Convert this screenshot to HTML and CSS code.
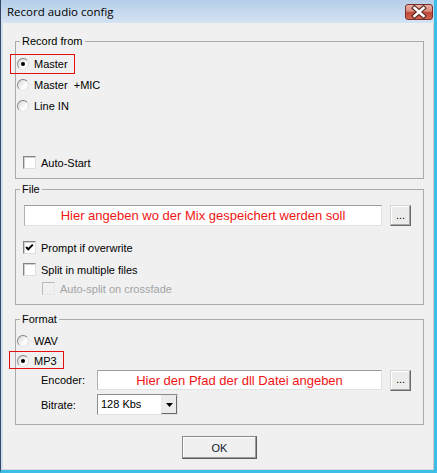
FILE: index.html
```html
<!DOCTYPE html>
<html lang="de">
<head>
  <meta charset="UTF-8">
  <meta name="viewport" content="width=device-width, initial-scale=1.0">
  <title>Record audio config</title>
  <link rel="stylesheet" href="styles.css">
</head>
<body>
  <div class="window">
    <div class="titlebar">
      <span class="title">Record audio config</span>
      <div class="close">
        <svg width="26" height="14" viewBox="0 0 26 14">
          <path d="M8.5 3 L17.5 11 M17.5 3 L8.5 11" stroke="#5b2620" stroke-width="4.8" stroke-linecap="square"/>
          <path d="M8.5 3 L17.5 11 M17.5 3 L8.5 11" stroke="#fff" stroke-width="2.6" stroke-linecap="square"/>
        </svg>
      </div>
    </div>

    <div class="client">
      <fieldset class="group g-record">
        <legend>Record from</legend>
        <div class="row r21"><span class="opt marked m-master"><span class="radio on"></span>Master</span></div>
        <div class="row r21"><span class="opt"><span class="radio"></span>Master &nbsp;+MIC</span></div>
        <div class="row r21"><span class="opt"><span class="radio"></span>Line IN</span></div>
        <div class="row r21 auto-start"><span class="opt"><span class="check"></span>Auto-Start</span></div>
      </fieldset>

      <fieldset class="group g-file">
        <legend>File</legend>
        <div class="row path-row">
          <div class="field path-field">Hier angeben wo der Mix gespeichert werden soll</div>
          <div class="browse">...</div>
        </div>
        <div class="row r19 prompt-row">
          <span class="opt"><span class="check on">
            <svg width="11" height="11" viewBox="0 0 11 11"><polyline points="2,5 4.3,7.3 8.8,2.6" fill="none" stroke="#000" stroke-width="2"/></svg>
          </span>Prompt if overwrite</span>
        </div>
        <div class="row r19 split-row"><span class="opt"><span class="check"></span>Split in multiple files</span></div>
        <div class="row r19 sub-row"><span class="opt disabled"><span class="check off"></span>Auto-split on crossfade</span></div>
      </fieldset>

      <fieldset class="group g-format">
        <legend>Format</legend>
        <div class="row r20"><span class="opt"><span class="radio"></span>WAV</span></div>
        <div class="row r19"><span class="opt marked m-mp3"><span class="radio on"></span>MP3</span></div>
        <div class="row enc-row">
          <span class="lbl">Encoder:</span>
          <div class="field enc-field">Hier den Pfad der dll Datei angeben</div>
          <div class="browse">...</div>
        </div>
        <div class="row bit-row">
          <span class="lbl">Bitrate:</span>
          <div class="combo">
            <span class="combo-value">128 Kbs</span>
            <span class="combo-btn">
              <svg width="7" height="4" viewBox="0 0 7 4"><polygon points="0,0 7,0 3.5,4" fill="#000"/></svg>
            </span>
          </div>
        </div>
      </fieldset>

      <div class="actions">
        <div class="btn-ok">OK</div>
      </div>
    </div>
  </div>
</body>
</html>
```

FILE: styles.css
```css
* { box-sizing: border-box; }
body {
  margin: 0;
  background: #f0f0f0;
  font-family: "Liberation Sans", Arial, sans-serif;
  font-size: 11px;
  color: #000;
}
.window {
  width: 437px;
  height: 473px;
  display: flex;
  flex-direction: column;
  border-left: 1px solid #34486a;
  border-right: 3px solid #3bbde6;
  border-bottom: 3px solid #3bbde6;
}
.titlebar {
  height: 23px;
  flex: none;
  display: flex;
  justify-content: space-between;
  align-items: flex-start;
  padding-left: 6px;
  background: linear-gradient(#b6cee9, #d5e3f3);
}
.title {
  font-family: "Open Sans", "Noto Sans", sans-serif;
  font-size: 11.5px;
  line-height: 23px;
}
.close {
  width: 28px;
  height: 16px;
  margin: 4px 1px 0 0;
  border: 1px solid #7a2f2a;
  border-radius: 3px;
  background: linear-gradient(#eab0a5 0%, #d98a7d 45%, #c24a3a 52%, #d06450 100%);
  display: flex;
}
.client {
  flex: 1;
  display: flex;
  flex-direction: column;
  border-left: 2px solid #d3e0ee;
  border-right: 1px solid #c9c9c9;
  border-bottom: 1px solid #d9d9d9;
  padding: 12px 9px 0 12px;
}
.group {
  margin: 0;
  border: 1px solid #aaa;
  min-width: 0;
}
.group legend {
  padding: 0 2px;
  margin-left: 4px;
  line-height: 13px;
}
.g-record { padding: 5px 0 5px; }
.g-file { margin-top: 4px; padding: 9px 0 6px; }
.g-format { margin-top: 8px; padding: 5px 0 9px; }

.row { display: flex; align-items: center; }
.r19 { height: 19px; }
.r20 { height: 20px; }
.r21 { height: 21px; }
.auto-start { margin-top: 36px; }
.prompt-row { margin-top: 12px; }
.split-row { margin-top: 3px; }

.opt {
  display: inline-flex;
  align-items: center;
  height: 100%;
  position: relative;
}
.opt.disabled { color: #a3a3a3; }
.marked::after {
  content: "";
  position: absolute;
  top: 1px;
  bottom: 0;
  left: -6px;
  right: -7px;
  border: 1px solid #e31010;
}
.m-mp3::after { top: 0; bottom: 1px; left: -7px; }

.radio {
  width: 12px;
  height: 12px;
  margin: 0 5px 0 1px;
  border-radius: 50%;
  border: 1px solid;
  border-color: #7e7e7e #dcdcdc #e8e8e8 #8c8c8c;
  background: linear-gradient(135deg, #d4d4d4, #fbfbfb 60%);
  display: flex;
  align-items: center;
  justify-content: center;
}
.radio.on::after {
  content: "";
  width: 4px;
  height: 4px;
  border-radius: 50%;
  background: #000;
}
.check {
  width: 13px;
  height: 13px;
  margin: 0 5px 0 7px;
  border: 1px solid;
  border-color: #848484 #dedede #dedede #848484;
  box-shadow: inset 1px 1px 0 #d0d0d0;
  background: #fff;
  display: flex;
}
.check.off {
  border-color: #b9b9b9 #e6e6e6 #e6e6e6 #b9b9b9;
  box-shadow: none;
  background: #f0f0f0;
}
.sub-row .check { margin-left: 26px; }

.field {
  background: #fff;
  border: 1px solid;
  border-color: #9c9c9c #e2e2e2 #e2e2e2 #b0b0b0;
  color: #f01414;
  font-size: 13px;
  display: flex;
  align-items: center;
  justify-content: center;
}
.path-field { width: 358px; height: 21px; margin-left: 8px; }
.browse {
  width: 21px;
  height: 21px;
  margin-left: 8px;
  border: 1px solid;
  border-color: #d4d4d4 #6a6a6a #6a6a6a #d4d4d4;
  box-shadow: inset -1px -1px 0 #a8a8a8, inset 1px 1px 0 #fff;
  background: #ececec;
  display: flex;
  align-items: center;
  justify-content: center;
  padding-bottom: 2px;
}
.lbl { width: 81px; padding-left: 25px; }
.enc-row { height: 20px; }
.enc-field { width: 285px; height: 20px; }
.bit-row { height: 21px; margin-top: 4px; }
.combo {
  width: 81px;
  height: 21px;
  display: flex;
  background: #fff;
  border: 1px solid;
  border-color: #8c8c8c #e2e2e2 #e2e2e2 #8c8c8c;
}
.combo-value { flex: 1; padding-left: 3px; line-height: 19px; }
.combo-btn {
  width: 16px;
  border: 1px solid;
  border-color: #e8e8e8 #6a6a6a #6a6a6a #e8e8e8;
  background: #ececec;
  display: flex;
  align-items: center;
  justify-content: center;
}
.actions {
  display: flex;
  justify-content: center;
  margin-top: 11px;
}
.btn-ok {
  width: 75px;
  height: 23px;
  border: 1px solid;
  border-color: #8a8a8a #5c5c5c #5c5c5c #8a8a8a;
  box-shadow: inset -1px -1px 0 #9c9c9c, inset 1px 1px 0 #fff;
  background: #f0f0f0;
  display: flex;
  align-items: center;
  justify-content: center;
  color: #111830;
}
```
